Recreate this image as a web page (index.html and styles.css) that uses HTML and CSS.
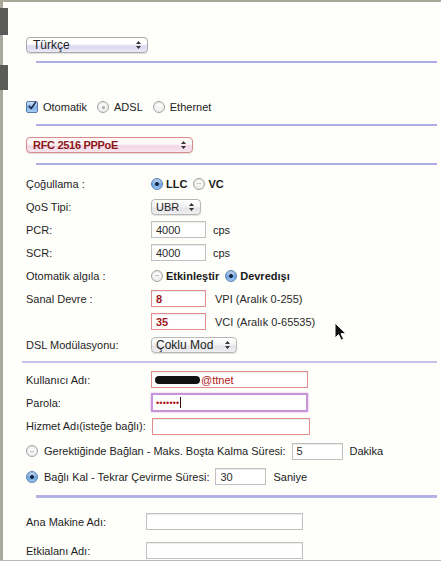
FILE: index.html
```html
<!DOCTYPE html>
<html lang="tr">
<head>
<meta charset="utf-8">
<title>Bağlantı Ayarları</title>
<link rel="stylesheet" href="styles.css">
</head>
<body>
<div class="window">
  <div class="rail"><span class="rail-mark"></span><span class="rail-mark second"></span></div>

  <main class="form">
    <div class="select lang">
      <span>Türkçe</span>
      <svg class="arrows" width="5" height="8" viewBox="0 0 5 8"><path d="M2.5 0 5 3H0zM0 5h5L2.5 8z"/></svg>
    </div>
    <div class="rule"></div>

    <div class="mode-row">
      <span class="check on">
        <svg width="12" height="12" viewBox="0 0 12 12"><path d="M2.6 6.2 5 9 10.2 1.6" fill="none" stroke="#1b2740" stroke-width="1.8" stroke-linecap="round" stroke-linejoin="round"/></svg>
      </span>
      <span class="opt">Otomatik</span>
      <span class="radio dim"></span>
      <span class="opt">ADSL</span>
      <span class="radio"></span>
      <span class="opt">Ethernet</span>
    </div>
    <div class="rule"></div>

    <div class="select proto">
      <span>RFC 2516 PPPoE</span>
      <svg class="arrows" width="5" height="8" viewBox="0 0 5 8"><path d="M2.5 0 5 3H0zM0 5h5L2.5 8z"/></svg>
    </div>
    <div class="rule"></div>

    <section class="fields">
      <div class="row">
        <span class="label">Çoğullama :</span>
        <span class="radio on"></span><b class="choice">LLC</b>
        <span class="radio idle"></span><b class="choice">VC</b>
      </div>
      <div class="row">
        <span class="label">QoS Tipi:</span>
        <div class="select small qos">
          <span>UBR</span>
          <svg class="arrows" width="5" height="8" viewBox="0 0 5 8"><path d="M2.5 0 5 3H0zM0 5h5L2.5 8z"/></svg>
        </div>
      </div>
      <div class="row">
        <span class="label">PCR:</span>
        <span class="field short">4000</span><span class="unit">cps</span>
      </div>
      <div class="row">
        <span class="label">SCR:</span>
        <span class="field short">4000</span><span class="unit">cps</span>
      </div>
      <div class="row">
        <span class="label">Otomatik algıla :</span>
        <span class="radio idle"></span><b class="choice">Etkinleştir</b>
        <span class="radio on"></span><b class="choice">Devredışı</b>
      </div>
      <div class="row">
        <span class="label">Sanal Devre :</span>
        <span class="field short alert value">8</span><span class="hint">VPI (Aralık 0-255)</span>
      </div>
      <div class="row">
        <span class="label"></span>
        <span class="field short alert value">35</span><span class="hint">VCI (Aralık 0-65535)</span>
      </div>
      <div class="row">
        <span class="label">DSL Modülasyonu:</span>
        <div class="select small mod">
          <span>Çoklu Mod</span>
          <svg class="arrows" width="5" height="8" viewBox="0 0 5 8"><path d="M2.5 0 5 3H0zM0 5h5L2.5 8z"/></svg>
        </div>
      </div>
    </section>
    <div class="rule left"></div>

    <section class="fields account">
      <div class="row">
        <span class="label">Kullanıcı Adı:</span>
        <span class="field long alert user"><span class="redact"></span>@ttnet</span>
      </div>
      <div class="row">
        <span class="label">Parola:</span>
        <span class="field long focus pass"><span class="dots">•••••••</span><span class="caret"></span></span>
      </div>
      <div class="row tall">
        <span class="label">Hizmet Adı(isteğe bağlı):</span>
        <span class="field long alert service"></span>
      </div>
      <div class="row dial on-demand">
        <span class="radio idle"></span>
        <span class="dial-text">Gerektiğinde Bağlan - Maks. Boşta Kalma Süresi:</span>
        <span class="field tiny">5</span><span class="unit">Dakika</span>
      </div>
      <div class="row dial">
        <span class="radio on"></span>
        <span class="dial-text">Bağlı Kal - Tekrar Çevirme Süresi:</span>
        <span class="field tiny">30</span><span class="unit">Saniye</span>
      </div>
    </section>
    <div class="rule thick"></div>

    <section class="fields host">
      <div class="row">
        <span class="label">Ana Makine Adı:</span>
        <span class="field host-field"></span>
      </div>
      <div class="row">
        <span class="label">Etkialanı Adı:</span>
        <span class="field host-field"></span>
      </div>
    </section>
  </main>

  <svg class="pointer" width="13" height="19" viewBox="0 0 13 19">
    <path d="M1 1v15l3.6-3.4 2.6 5.6 2.4-1.1-2.6-5.4H12z" fill="#111" stroke="#fff" stroke-width="1" stroke-linejoin="round"/>
  </svg>
</div>
</body>
</html>
```

FILE: styles.css
```css
html, body {
  margin: 0;
  padding: 0;
  background: #fefefb;
}

.window {
  position: relative;
  display: flex;
  height: 561px;
  box-sizing: border-box;
  border-top: 2px solid #a9a99b;
  border-bottom: 1px solid #b9b9b4;
  overflow: hidden;
  font-family: "Liberation Sans", Arial, sans-serif;
  font-size: 11px;
  color: #1c1c1c;
}

/* left window edge */
.rail {
  flex: none;
  width: 3px;
  background: #aaa89e;
  display: flex;
  flex-direction: column;
}
.rail-mark {
  display: block;
  flex: none;
  width: 8px;
  height: 27px;
  margin-top: 6px;
  background: #5a5a58;
}
.rail-mark.second {
  height: 25px;
  margin-top: 30px;
}

.form {
  flex: 1;
  padding-left: 23px;
  display: flex;
  flex-direction: column;
}
.form > *,
.fields > * {
  flex: none;
}

/* separators */
.rule {
  height: 2px;
  margin-left: 10px;
  margin-right: 4px;
  background: #aeaee6;
}
.rule.left {
  margin-left: -4px;
  margin-top: 5px;
  background: #c4c4ec;
}
.rule.thick {
  height: 3px;
  margin-top: 6px;
  background: #b3b3e6;
}

/* aqua popup menus */
.select {
  display: flex;
  align-items: center;
  justify-content: space-between;
  box-sizing: border-box;
  height: 16px;
  padding: 0 6px 0 6px;
  border: 1px solid #a9a9a9;
  border-radius: 4px;
  background: linear-gradient(#ffffff 0%, #ffffff 42%, #d9d9f1 58%, #e9e9f6 100%);
  box-shadow: 0 1px 1px rgba(0, 0, 0, 0.12);
  font-size: 12px;
  color: #1e1e1e;
}
.select .arrows {
  fill: #333;
  flex: none;
}
.lang {
  width: 122px;
  margin-top: 35px;
  margin-bottom: 8px;
}
.proto {
  width: 167px;
  margin-top: 11px;
  margin-bottom: 10px;
  border-color: #d98a8a;
  background: linear-gradient(#fff8f8 0%, #fff8f8 42%, #f0d6e6 58%, #f7e6ee 100%);
  font-weight: bold;
  font-size: 11px;
  letter-spacing: -0.3px;
  color: #8c1616;
}
.select.small {
  height: 16px;
  font-size: 11px;
  background: linear-gradient(#ffffff 0%, #f4f4f4 45%, #e4e4e8 60%, #efeff2 100%);
  border-color: #b7b7b7;
}
.qos {
  width: 50px;
  padding-left: 4px;
}
.select.mod {
  width: 86px;
  padding-left: 4px;
  font-size: 12px;
}

/* top mode row */
.mode-row {
  display: flex;
  align-items: center;
  height: 14px;
  margin-top: 37px;
  margin-bottom: 10px;
}
.opt {
  margin-left: 5px;
  margin-right: 10px;
  color: #222;
}

.check {
  flex: none;
  width: 12px;
  height: 12px;
  box-sizing: border-box;
  border: 1px solid #587aa8;
  border-radius: 2px;
  background: linear-gradient(#d2e4f8, #7fb0e8 55%, #a9cdf2);
  display: flex;
  align-items: center;
  justify-content: center;
}
.check svg {
  display: block;
  margin-top: -2px;
}

/* radio buttons */
.radio {
  flex: none;
  position: relative;
  width: 12px;
  height: 12px;
  box-sizing: border-box;
  border-radius: 50%;
  border: 1px solid #a2a2a2;
  background: linear-gradient(#ffffff, #ececec);
  box-shadow: inset 0 1px 1px rgba(0, 0, 0, 0.12);
}
.radio.idle::after,
.radio.dim::after {
  content: "";
  position: absolute;
  left: 3px;
  top: 4.5px;
  width: 4px;
  height: 1px;
  background: #c6c6c6;
}
.radio.dim::after {
  left: 3.5px;
  top: 3.5px;
  width: 3px;
  height: 3px;
  border-radius: 50%;
  background: #a8a8a8;
}
.radio.on {
  border-color: #5b7fae;
  background: radial-gradient(circle at 50% 50%, #1b2a44 0 1.6px, transparent 2.2px),
              linear-gradient(#c9ddf5, #6ea4e2 60%, #a5c8ef);
}

/* rows */
.fields {
  display: flex;
  flex-direction: column;
  margin-top: 7px;
}
.row {
  display: flex;
  align-items: center;
  height: 23px;
}
.label {
  flex: none;
  width: 125px;
  color: #1e1e1e;
}
.choice {
  margin-left: 3px;
  margin-right: 6px;
  color: #1a1a1a;
}

.field {
  flex: none;
  display: flex;
  align-items: center;
  box-sizing: border-box;
  height: 17px;
  padding: 0 4px;
  border: 1px solid #c0c0c0;
  background: #fff;
  box-shadow: inset 0 1px 1px rgba(0, 0, 0, 0.08);
  color: #2a2a2a;
}
.field.short {
  width: 55px;
}
.field.alert {
  border-color: #e28c8c;
}
.field.value {
  font-weight: bold;
  color: #a0161c;
}
.unit {
  margin-left: 7px;
  color: #222;
}
.hint {
  margin-left: 9px;
  color: #2a2a2a;
}

/* account section */
.account {
  margin-top: 5px;
}
.row.tall {
  height: 24px;
}
.field.long {
  width: 157px;
}
.field.service {
  width: 158px;
  margin-left: 1px;
}
.user {
  color: #b01818;
  padding-left: 3px;
}
.redact {
  display: inline-block;
  width: 45px;
  height: 8px;
  margin-right: 1px;
  border-radius: 4px;
  background: #111;
  filter: blur(0.6px);
}
.field.focus {
  height: 19px;
  border: 2px solid #c894d8;
  box-shadow: 0 0 2px #dcb2ea;
  padding-left: 3px;
}
.dots {
  font-size: 9px;
  color: #b01818;
  letter-spacing: 0.2px;
}
.caret {
  width: 1px;
  height: 11px;
  margin-left: 1px;
  background: #3a0a0a;
}

.row.dial {
  height: 25px;
}
.row.on-demand {
  height: 26px;
}
.dial-text {
  margin-left: 6px;
  margin-right: 6px;
  color: #1e1e1e;
}
.field.tiny {
  width: 51px;
  padding-left: 4px;
}

/* host section */
.host {
  margin-top: 9px;
}
.host .row {
  height: 29px;
}
.host .label {
  width: 120px;
}
.field.host-field {
  width: 157px;
}

/* mouse pointer */
.pointer {
  position: absolute;
  left: 334px;
  top: 320px;
}
```
